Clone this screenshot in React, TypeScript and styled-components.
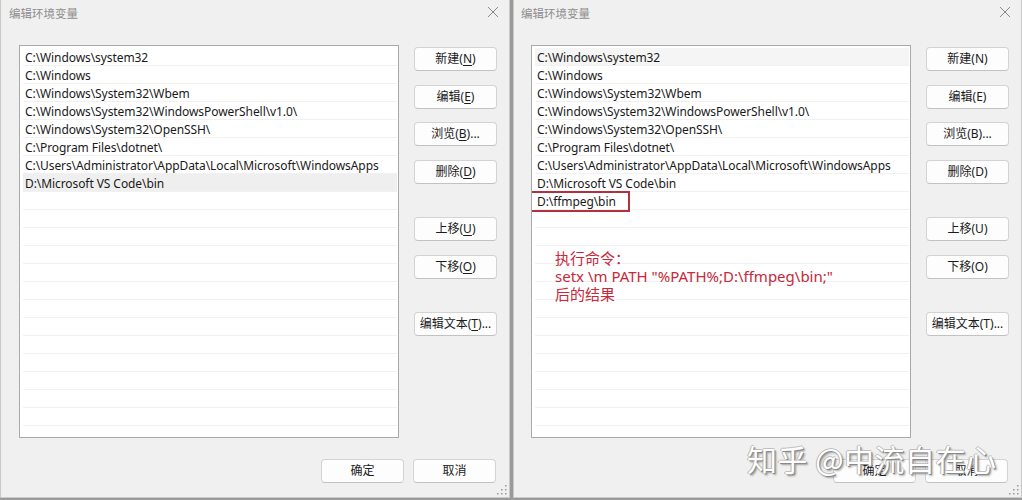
import styled, { createGlobalStyle } from "styled-components";

const GlobalStyle = createGlobalStyle`
  html, body {
    margin: 0;
    padding: 0;
    background: #9a9a9a;
  }
  body {
    font-family: "Noto Sans", "Noto Sans CJK SC", sans-serif;
  }
`;

const Page = styled.main`
  position: relative;
  display: flex;
  gap: 3px;
  width: 1022px;
  height: 500px;
  overflow: hidden;
`;

const Dialog = styled.section<{ $width: number; $pad: number }>`
  position: relative;
  width: ${({ $width }) => $width}px;
  height: 498px;
  box-sizing: border-box;
  background: #f0f0f0;
  border: 1px solid #c9c9c9;
  border-top: none;
  display: flex;
  flex-direction: column;
  padding-left: ${({ $pad }) => $pad}px;
`;

const TitleBar = styled.header<{ $offset: number }>`
  height: 25px;
  display: flex;
  align-items: center;
  justify-content: space-between;
  margin-left: ${({ $offset }) => $offset}px;
  padding-right: 10px;
  font-family: "Noto Sans CJK SC", sans-serif;
  font-size: 11.5px;
  color: #8d8d8d;
`;

const CloseButton = styled.span`
  width: 12px;
  height: 12px;
  display: flex;
  margin-top: -1px;
`;

const Body = styled.div`
  margin-top: 20px;
  display: flex;
  gap: 15px;
`;

const ListBox = styled.div`
  position: relative;
  width: 380px;
  height: 393px;
  box-sizing: border-box;
  background: #ffffff;
  border: 1px solid #a9a9a9;
  padding: 2px 1px 0 3px;
  overflow: hidden;
`;

const Row = styled.div<{ $selected?: boolean; $tone: string }>`
  position: relative;
  height: 18px;
  box-sizing: border-box;
  border-bottom: 1px solid #f1f1f1;
  background: ${({ $selected, $tone }) => ($selected ? $tone : "transparent")};
  padding-left: 2px;
  font-family: "Noto Sans", "Noto Sans CJK SC", sans-serif;
  font-size: 12px;
  letter-spacing: -0.08px;
  line-height: 19px;
  color: #1a1a1a;
  white-space: nowrap;
`;

const Marked = styled.span`
  position: absolute;
  left: -6px;
  top: -1px;
  width: 101px;
  height: 21px;
  border: 2px solid #b3313f;
  box-sizing: border-box;
`;

const Note = styled.div`
  position: absolute;
  left: 23px;
  top: 203px;
  font-family: "Noto Sans", "Noto Sans CJK SC", sans-serif;
  font-size: 15px;
  line-height: 18px;
  color: #c8283a;
  white-space: nowrap;
`;

const ButtonColumn = styled.div`
  display: flex;
  flex-direction: column;
  padding-top: 2px;
`;

const Button = styled.button<{ $gap?: number }>`
  width: 83px;
  height: 24px;
  margin-top: ${({ $gap }) => $gap ?? 0}px;
  background: #fdfdfd;
  border: 1px solid #d3d3d3;
  border-bottom-color: #c2c2c2;
  border-radius: 4px;
  font-family: "Noto Sans", "Noto Sans CJK SC", sans-serif;
  font-size: 12px;
  color: #1b1b1b;
  padding: 0;
  line-height: 22px;
  white-space: nowrap;
`;

const Key = styled.span`
  text-decoration: underline;
  text-underline-offset: 2px;
`;

const Footer = styled.footer`
  margin-top: 21px;
  padding-right: 13px;
  display: flex;
  justify-content: flex-end;
  gap: 9px;
`;

const Grip = styled.svg`
  position: absolute;
  right: 2px;
  bottom: 2px;
`;

const Watermark = styled.div`
  position: absolute;
  left: 747px;
  top: 436px;
  font-family: "Noto Sans CJK SC", sans-serif;
  font-size: 30px;
  letter-spacing: 0.5px;
  color: #ffffff;
  white-space: nowrap;
  pointer-events: none;
  text-shadow: 1px 1px 0 #8a8a8a, -1px 0 0 #b5b5b5, 0 -1px 0 #c0c0c0,
    2px 2px 2px rgba(0, 0, 0, 0.35);
`;

const paths = [
  "C:\\Windows\\system32",
  "C:\\Windows",
  "C:\\Windows\\System32\\Wbem",
  "C:\\Windows\\System32\\WindowsPowerShell\\v1.0\\",
  "C:\\Windows\\System32\\OpenSSH\\",
  "C:\\Program Files\\dotnet\\",
  "C:\\Users\\Administrator\\AppData\\Local\\Microsoft\\WindowsApps",
  "D:\\Microsoft VS Code\\bin",
];

const sideButtons = [
  { label: "新建", key: "N", gap: 0 },
  { label: "编辑", key: "E", gap: 14 },
  { label: "浏览", key: "B", tail: "...", gap: 13 },
  { label: "删除", key: "D", gap: 14 },
  { label: "上移", key: "U", gap: 33 },
  { label: "下移", key: "O", gap: 14 },
  { label: "编辑文本", key: "T", tail: "...", gap: 33 },
];

function CloseIcon() {
  return (
    <CloseButton>
      <svg width="12" height="12" viewBox="0 0 12 12">
        <path d="M1 1L11 11M11 1L1 11" stroke="#8a8a8a" strokeWidth="1" />
      </svg>
    </CloseButton>
  );
}

function ResizeGrip() {
  const dots = [
    [9, 1],
    [9, 5],
    [5, 5],
    [9, 9],
    [5, 9],
    [1, 9],
  ];
  return (
    <Grip width="11" height="11" viewBox="0 0 11 11">
      {dots.map(([x, y]) => (
        <rect key={`${x}-${y}`} x={x} y={y} width="1.5" height="1.5" fill="#9a9a9a" />
      ))}
    </Grip>
  );
}

function EnvDialog({
  width,
  pad,
  entries,
  selected,
  tone,
  underline,
  annotated,
}: {
  width: number;
  pad: number;
  entries: string[];
  selected: number;
  tone: string;
  underline: boolean;
  annotated: boolean;
}) {
  const rows = Array.from({ length: 22 }, (_, i) => entries[i] ?? "");
  return (
    <Dialog $width={width} $pad={pad}>
      <TitleBar $offset={-10}>
        <span>编辑环境变量</span>
        <CloseIcon />
      </TitleBar>
      <Body>
        <ListBox>
          {rows.map((text, i) => (
            <Row key={i} $selected={i === selected} $tone={tone}>
              {text}
              {annotated && text === "D:\\ffmpeg\\bin" && <Marked />}
            </Row>
          ))}
          {annotated && (
            <Note>
              执行命令：
              <br />
              setx \m PATH "%PATH%;D:\ffmpeg\bin;"
              <br />
              后的结果
            </Note>
          )}
        </ListBox>
        <ButtonColumn>
          {sideButtons.map((b) => (
            <Button key={b.label} $gap={b.gap}>
              {b.label}(
              {underline ? <Key>{b.key}</Key> : b.key})
              {b.tail ?? ""}
            </Button>
          ))}
        </ButtonColumn>
      </Body>
      <Footer>
        <Button>确定</Button>
        <Button>取消</Button>
      </Footer>
      <ResizeGrip />
    </Dialog>
  );
}

export default function App() {
  return (
    <>
      <GlobalStyle />
      <Page>
        <EnvDialog
          width={510}
          pad={18}
          entries={paths}
          selected={7}
          tone="#efefef"
          underline
          annotated={false}
        />
        <EnvDialog
          width={509}
          pad={17}
          entries={[...paths, "D:\\ffmpeg\\bin"]}
          selected={0}
          tone="#f5f5f5"
          underline={false}
          annotated
        />
        <Watermark>知乎 @中流自在心</Watermark>
      </Page>
    </>
  );
}
